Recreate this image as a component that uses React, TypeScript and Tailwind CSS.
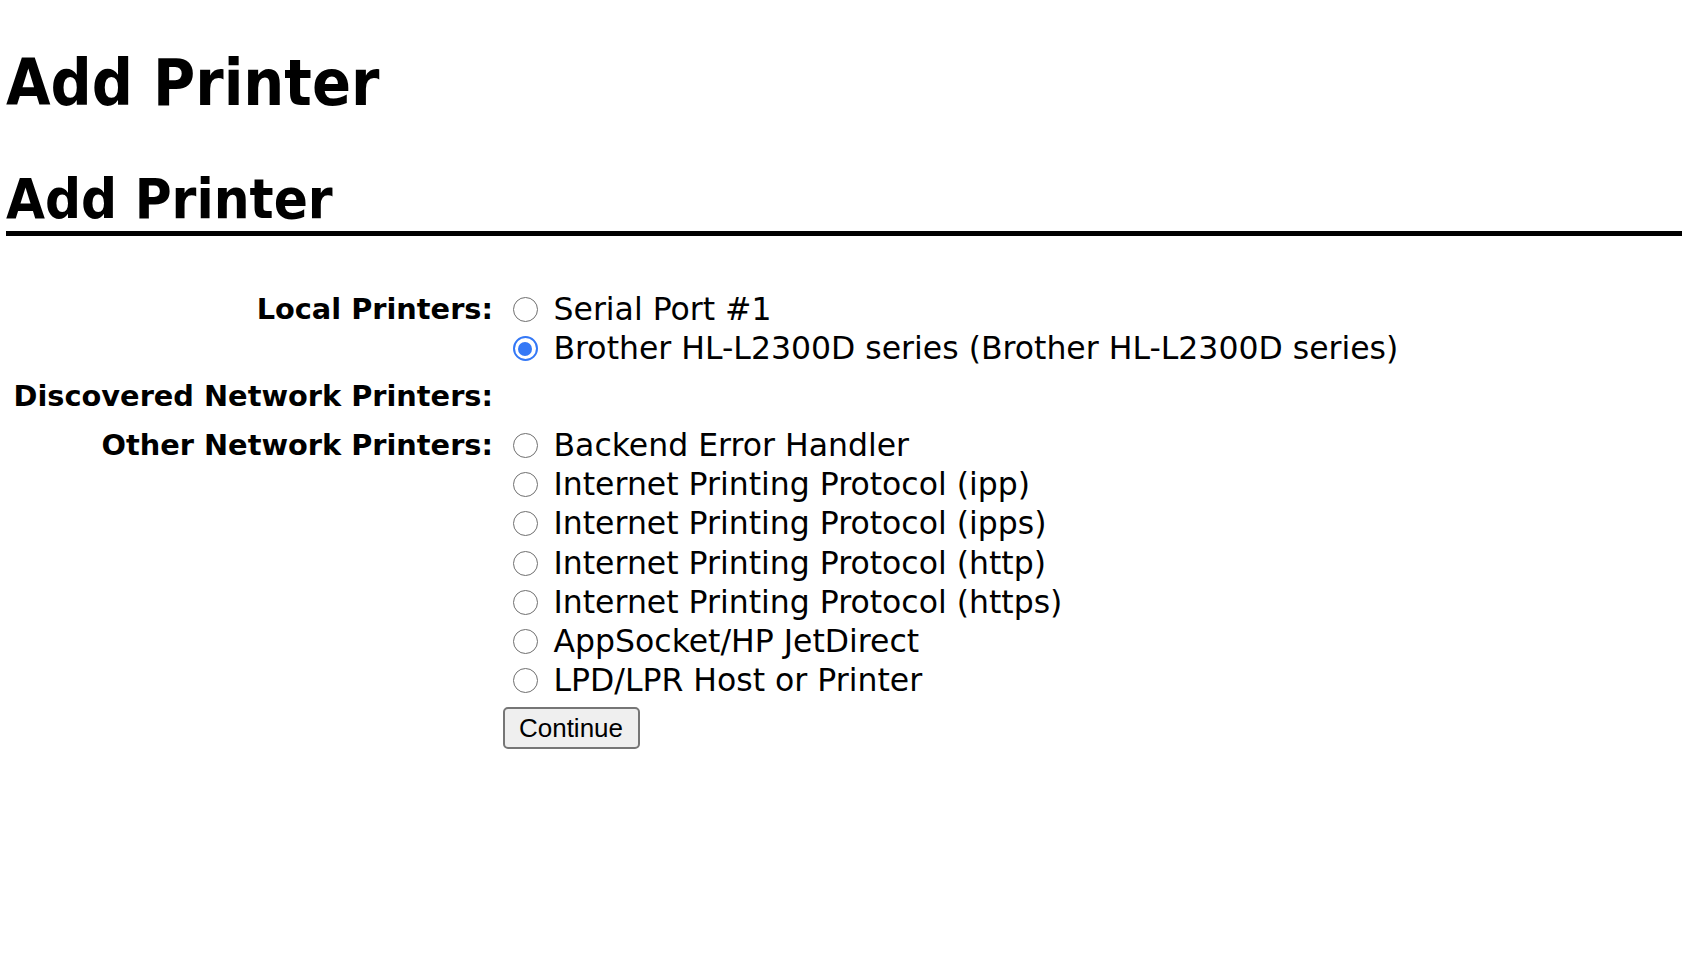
import React from 'react';

const localPrinters = [
  { label: 'Serial Port #1', checked: false },
  { label: 'Brother HL-L2300D series (Brother HL-L2300D series)', checked: true },
];

const otherPrinters = [
  'Backend Error Handler',
  'Internet Printing Protocol (ipp)',
  'Internet Printing Protocol (ipps)',
  'Internet Printing Protocol (http)',
  'Internet Printing Protocol (https)',
  'AppSocket/HP JetDirect',
  'LPD/LPR Host or Printer',
];

const Radio: React.FC<{ checked?: boolean }> = ({ checked }) =>
  checked ? (
    <span className="ml-[10px] flex h-[25px] w-[25px] shrink-0 items-center justify-center rounded-full border-[2.5px] border-[#3478f6] bg-white">
      <span className="h-[14px] w-[14px] rounded-full bg-[#3478f6]" />
    </span>
  ) : (
    <span className="ml-[10px] h-[25px] w-[25px] shrink-0 rounded-full border-[1.7px] border-[#6f6f6f] bg-white" />
  );

const Option: React.FC<{ label: string; checked?: boolean }> = ({ label, checked }) => (
  <div className="flex h-[39.2px] items-center gap-[16px] whitespace-nowrap">
    <Radio checked={checked} />
    <span className="leading-[39px]">{label}</span>
  </div>
);

const Label: React.FC<{ children: React.ReactNode; className?: string }> = ({ children, className }) => (
  <div className={`text-right text-[28.8px] font-bold leading-[39px] whitespace-nowrap ${className ?? ''}`}>
    {children}
  </div>
);

export default function App() {
  return (
    <div className="min-h-screen bg-white pl-[6px] text-black font-['DejaVu_Sans',sans-serif]">
      <h1 className="pt-[43px] text-[64px] font-bold leading-[80px] font-['DejaVu_Sans_Condensed','DejaVu_Sans',sans-serif]">
        Add Printer
      </h1>
      <h2 className="mt-[43px] border-b-[5px] border-black text-[56px] font-bold leading-[65px] font-['DejaVu_Sans_Condensed','DejaVu_Sans',sans-serif]">
        Add Printer
      </h2>

      <div className="mt-[54px] grid grid-cols-[487px_1fr] gap-x-[9.5px] gap-y-[8.5px] text-[31.5px]">
        <Label>Local Printers:</Label>
        <div className="flex flex-col">
          {localPrinters.map((p) => (
            <Option key={p.label} label={p.label} checked={p.checked} />
          ))}
        </div>

        <Label className="mb-[1.5px]">Discovered Network Printers:</Label>
        <div />

        <Label>Other Network Printers:</Label>
        <div className="flex flex-col">
          {otherPrinters.map((p) => (
            <Option key={p} label={p} />
          ))}
        </div>

        <div />
        <div className="-mt-[6px]">
          <button className="h-[42px] w-[137px] rounded-[5px] border-2 border-[#767676] bg-[#efefef] text-[26px] leading-none text-black font-['Liberation_Sans',Arial,sans-serif]">
            Continue
          </button>
        </div>
      </div>
    </div>
  );
}
